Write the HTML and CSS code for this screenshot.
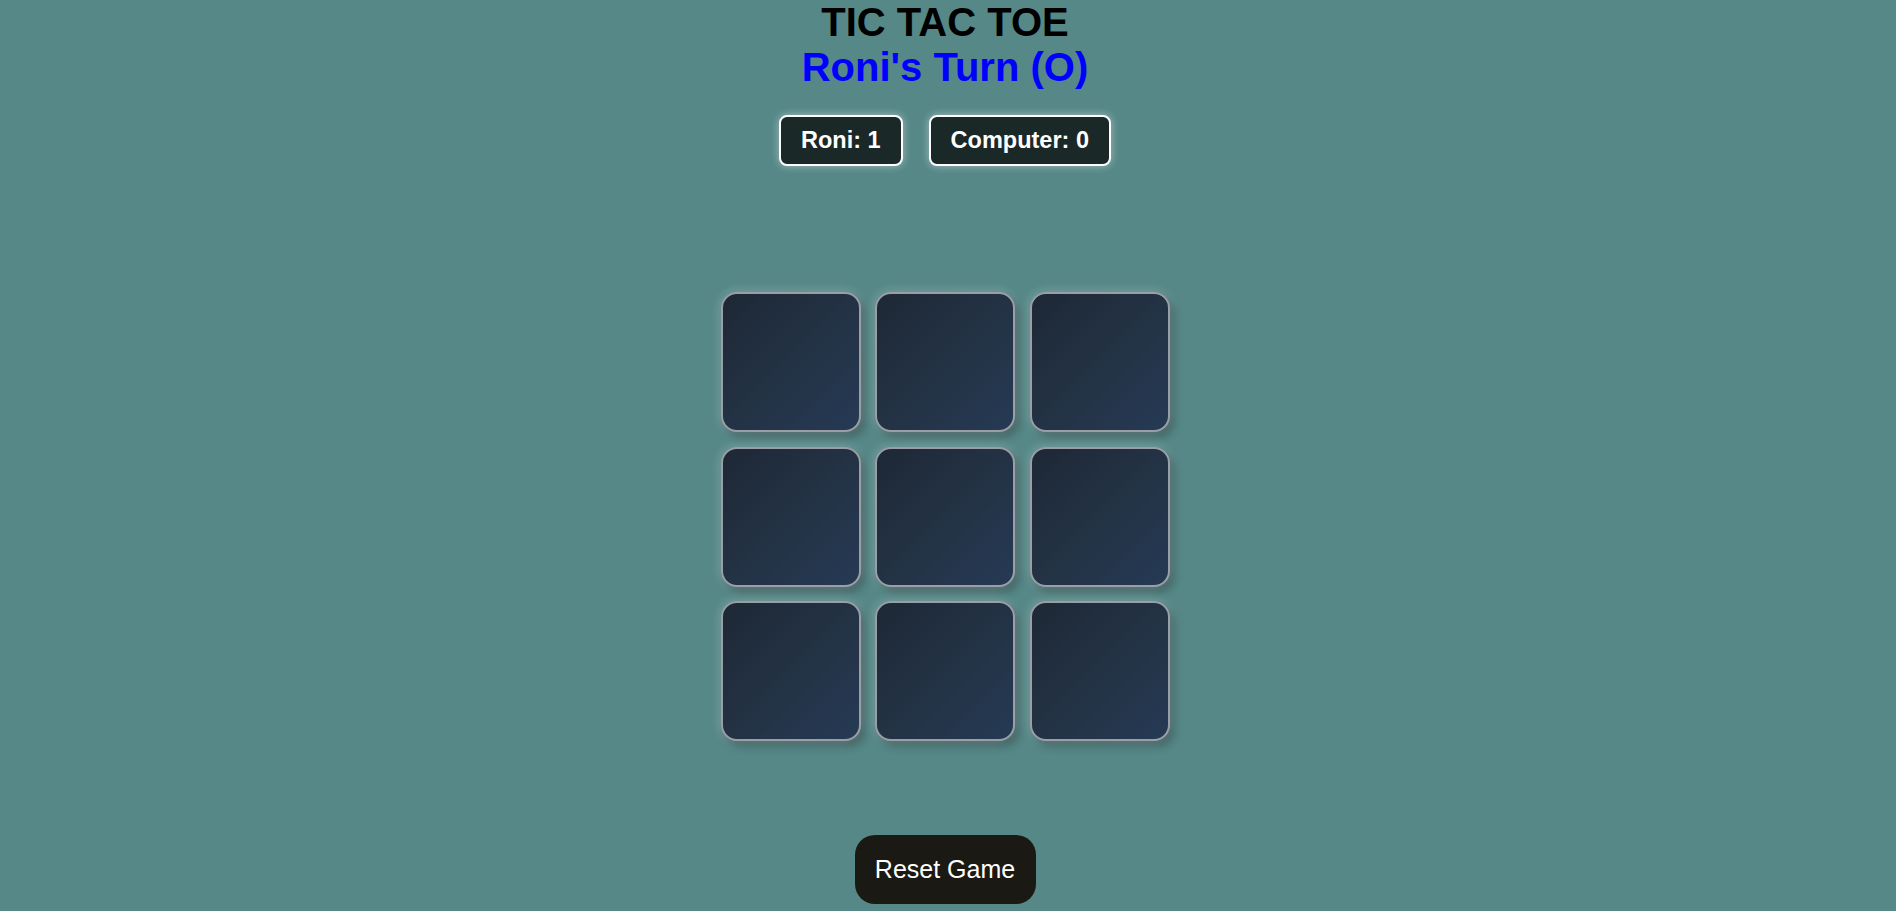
FILE: index.html
```html
<!DOCTYPE html>
<html lang="en">
<head>
<meta charset="utf-8">
<title>Tic Tac Toe</title>
<link rel="stylesheet" href="styles.css">
</head>
<body>
<main class="game">
  <h1 class="title">TIC TAC TOE</h1>
  <h2 class="turn">Roni's Turn (O)</h2>
  <div class="scores">
    <div class="score">Roni: 1</div>
    <div class="score">Computer: 0</div>
  </div>
  <div class="board">
    <button class="cell"></button>
    <button class="cell"></button>
    <button class="cell"></button>
    <button class="cell"></button>
    <button class="cell"></button>
    <button class="cell"></button>
    <button class="cell"></button>
    <button class="cell"></button>
    <button class="cell"></button>
  </div>
  <button class="reset">Reset Game</button>
</main>
</body>
</html>
```

FILE: styles.css
```css
html, body {
  margin: 0;
  padding: 0;
}

body {
  background: #568888;
  font-family: "Liberation Sans", Arial, sans-serif;
  min-height: 911px;
  padding-right: 6px;
  box-sizing: border-box;
}

.game {
  display: flex;
  flex-direction: column;
  align-items: center;
}

.title {
  margin: 0;
  font-size: 40px;
  font-weight: bold;
  line-height: 44.5px;
  color: #000;
}

.turn {
  margin: 0;
  font-size: 40px;
  font-weight: bold;
  line-height: 44.5px;
  color: #0000ff;
}

.scores {
  display: flex;
  gap: 26px;
  margin-top: 26px;
}

.score {
  background: #1b2828;
  color: #fff;
  font-size: 23.5px;
  font-weight: bold;
  line-height: 27px;
  padding: 10px 20px;
  border: 2px solid #fff;
  border-radius: 8px;
  box-shadow: 0 0 8px rgba(255, 255, 255, 0.45);
}

.board {
  display: grid;
  grid-template-columns: repeat(3, 140px);
  grid-template-rows: repeat(3, 140px);
  gap: 14.5px;
  margin-top: 126px;
}

.cell {
  width: 140px;
  height: 140px;
  box-sizing: border-box;
  border: 2px solid #9a9ea6;
  border-radius: 16px;
  background: linear-gradient(135deg, #1e2836 0%, #233244 50%, #263a55 100%);
  box-shadow: 0 0 12px rgba(255, 255, 255, 0.28), 4px 5px 8px rgba(0, 0, 0, 0.35);
  padding: 0;
}

.reset {
  margin-top: 94px;
  background: #1a1913;
  color: #fff;
  border: none;
  border-radius: 20px;
  font-family: "Liberation Sans", Arial, sans-serif;
  font-size: 25px;
  line-height: 28px;
  padding: 20px 0 21px;
  width: 181px;
}
```
